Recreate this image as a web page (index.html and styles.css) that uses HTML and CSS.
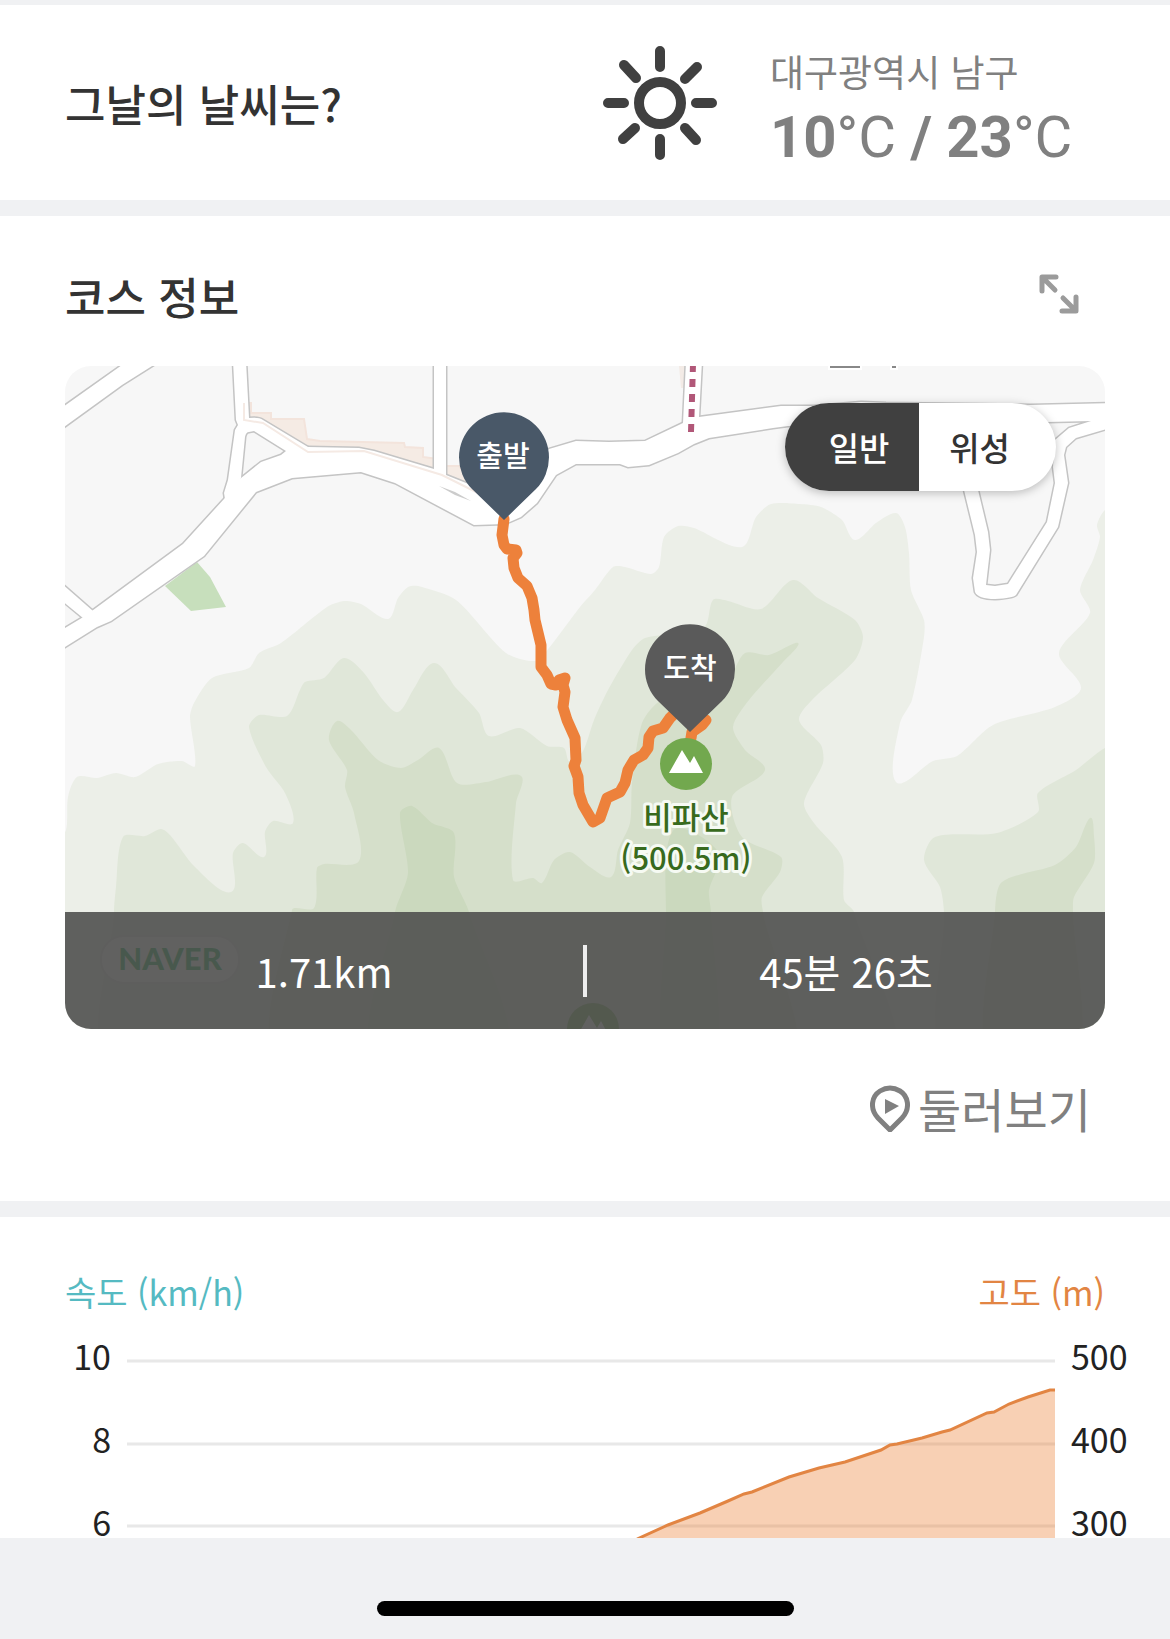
FILE: index.html
```html
<!DOCTYPE html>
<html lang="ko">
  <head>
    <meta charset="utf-8">
    <meta name="viewport" content="width=device-width, initial-scale=1">
    <title>코스 정보</title>
    <link rel="stylesheet" href="styles.css">
  </head>
  <body>
    <main>
      <section class="weather">
        <h2>그날의 날씨는?</h2>
        <svg class="sun" viewBox="0 0 114 114">
          <circle cx="57" cy="57" r="21" />
          <path d="M57 5v16M57 93v16M5 57h16M93 57h16M21 19l12 13M94 21L82 33M20 93l12-11M82 82l11 12" />
        </svg>
        <div class="weather-text">
          <p class="place">대구광역시 남구</p>
          <p class="temp">10<span>°C</span> / 23<span>°C</span></p>
        </div>
      </section>

      <section class="course">
        <div class="course-head">
          <h2>코스 정보</h2>
          <button class="expand" aria-label="확대">
            <svg viewBox="0 0 40 40">
              <path d="M3 17V3h14M4 4l12 12M37 23v14H23M36 36L24 24" />
            </svg>
          </button>
        </div>

        <div class="map">
          <svg class="map-canvas" viewBox="0 0 1040 663" preserveAspectRatio="xMidYMid slice">
            <defs>
              <g id="roads">
                <path d="M-5 265L20 250 35 239 118 178 159 133 176 112 196 96 216 89 221 85 243 81 294 82 309 85 369 103 381 109 406 119 440 125 484 83 511 75 544 76 580 75 618 57 634 51 716 40 749 40 796 36 821 37 966 39 1045 37V62L1011 72 1001 81 999 89 1003 117 993 161 951 229Q948 232 930 233 913 233 910 226L908 212 912 186 910 169 899 124 890 90H904L913 124 923 166 925 184 921 219 930 220 943 218 982 156 990 117 988 101 990 74 1004 62 1026 55 982 56 880 60 723 60 708 62 644 72 629 78 613 87 584 99 563 101 555 98 511 98 491 109 472 137 456 151 440 158 409 159 330 117 296 106 227 112 191 126 139 190 46 255 32 261 -5 284Z" />
                <path d="M168 -5L171 54 173 59 170 64 163 114 159 127 160 133 168 131 176 112 180 71Q181 66 184 66L189 65 221 85 243 95V81L198 54Q194 51 184 52L181 -5Z" />
                <path d="M369 -5V110H381V-5Z" />
                <path d="M621 -5L618 57 620 66 634 60V51L637 -5Z" />
                <path d="M-5 43L57 -1 95 -5 57 19 -5 64Z" />
                <path d="M-5 216L28 245 30 255 18 252 -5 233Z" />
              </g>
              <g id="peak">
                <circle r="26" fill="#72a84e" />
                <path d="M-17 9L-4 -14 4 -1 8 -8 17 9Z" fill="#fff" />
              </g>
            </defs>
            <rect width="1040" height="663" fill="#f7f7f7" />
            <g id="contours"></g>
            <path d="M100 220L132 196 145 211 161 241 126 245Z" fill="#c7dfbc" />
            <path class="block" d="M179 37H186V47H206V53H239L242 73 255 75 339 77 340 81 358 82V91L372 93 373 100H394L418 130 240 90 179 54Z" />
            <path d="M614 0h6v22h-4z" fill="#f3ebe6" />
            <use href="#roads" class="road-edge" />
            <use href="#roads" fill="#fff" />
            <path d="M179 37V54L198 57 243 86 299 85 377 109 421 131" fill="none" stroke="#f5eae4" stroke-width="2" />
            <path d="M374 120L390 126 406 135 390 129Z" fill="#ccc" />
            <path d="M628 -2L626 66" fill="none" stroke="#b15778" stroke-width="6" stroke-dasharray="8 7" />
            <path d="M765 0h30v2h-30zM827 0h4v2h-4z" class="cut-label" />

            <path class="track" d="M439 153L437 169 439 179 442 183 451 184 452 187 448 192 449 202 453 212 462 220 467 232 469 244 470 254 476 279 476 301 482 309 486 318 491 319 494 314 500 312 498 319 500 326 498 341 502 354 510 372 511 394 509 400 513 411 514 427 518 439 528 456 535 452 542 432 555 426 560 417 563 404 569 394 578 389 583 382 584 371 588 365 598 362 605 352 611 346M641 354L637 359 627 366 626 372" />
            <path d="M439 154L407 123A45 45 0 1 1 471 123Z" fill="#495868" />
            <path d="M625 366L593 335A45 45 0 1 1 657 335Z" fill="#5a5a5a" />
            <text class="pin-label" x="438" y="101">출발</text>
            <text class="pin-label" x="625" y="313">도착</text>
            <use href="#peak" x="621" y="398" />
            <text class="peak-label" x="621" y="463">비파산</text>
            <text class="peak-label" x="621" y="504">(500.5m)</text>
            <use href="#peak" x="528" y="663" />
            <rect x="36" y="570" width="138" height="47" rx="23" fill="#fff" stroke="#ddd" stroke-width="2" />
            <text class="brand" x="105" y="604">NAVER</text>
          </svg>

          <div class="map-type">
            <button class="on">일반</button>
            <button>위성</button>
          </div>

          <div class="stats">
            <span>1.71km</span>
            <i></i>
            <span>45분 26초</span>
          </div>
        </div>

        <a class="look" href="#">
          <svg viewBox="0 -2 40 48">
            <path d="M20 44L8 32C-1 22 2 10 10 5Q20 -1 30 5C38 10 41 22 32 32Z" fill="none" stroke="#808080" stroke-width="5" />
            <path d="M15 13v15l14-8z" fill="#808080" />
          </svg>
          둘러보기
        </a>
      </section>

      <section class="chart">
        <div class="chart-head">
          <span class="speed">속도 (km/h)</span>
          <span class="height">고도 (m)</span>
        </div>
        <div class="plot">
          <div class="axis axis-left">
            <span>10</span>
            <span>8</span>
            <span>6</span>
          </div>
          <svg viewBox="0 0 928 222" preserveAspectRatio="none">
            <path d="M0 45H928M0 128H928M0 210H928" stroke="#e8e8e8" stroke-width="3" />
            <path d="M510 223L541 209 573 197 601 185 617 178 625 176 662 161 692 152 718 146 754 134 763 129 770 128 795 122 815 116 823 114 860 97 867 96 882 88 901 81 923 74 928 74V223Z" fill="#eb7e30" fill-opacity=".36" />
            <path d="M510 223L541 209 573 197 601 185 617 178 625 176 662 161 692 152 718 146 754 134 763 129 770 128 795 122 815 116 823 114 860 97 867 96 882 88 901 81 923 74 928 74" fill="none" stroke="#e28543" stroke-width="3" />
          </svg>
          <div class="axis">
            <span>500</span>
            <span>400</span>
            <span>300</span>
          </div>
        </div>
      </section>
    </main>
    <footer>
      <div class="home-bar"></div>
    </footer>
    <script src="script.js"></script>
  </body>
</html>
```

FILE: styles.css
```css
* {
  box-sizing: border-box;
}
body {
  margin: 0;
  background-color: #f0f1f3;
  color: #333;
  font-family: "Noto Sans CJK KR", sans-serif;
}
h2, p {
  margin: 0;
}
h2 {
  font-size: 44px;
  font-weight: 500;
  line-height: 60px;
}
button {
  border: 0;
  padding: 0;
  background: none;
  font: inherit;
  color: inherit;
}
section {
  background-color: #fff;
  padding: 0 65px;
  margin-bottom: 16px;
}

/* weather */
.weather {
  display: flex;
  align-items: center;
  margin-top: 5px;
  height: 195px;
}
.weather h2 {
  flex: 1;
}
.sun {
  width: 114px;
  height: 114px;
  fill: none;
  stroke: #404040;
  stroke-width: 10px;
  stroke-linecap: round;
}
.weather-text {
  width: 335px;
  margin-left: 53px;
  padding-top: 6px;
  color: #808080;
}
.place {
  font-size: 37px;
  line-height: 62px;
}
.temp {
  font-family: Roboto, "Noto Sans CJK KR", sans-serif;
  font-size: 58px;
  font-weight: bold;
  line-height: 70px;
  white-space: nowrap;
}
.temp span {
  font-weight: 400;
}

/* course */
.course {
  padding-bottom: 60px;
}
.course-head {
  display: flex;
  justify-content: space-between;
  align-items: flex-end;
  height: 150px;
  padding: 0 26px 40px 0;
}
.expand {
  padding-bottom: 12px;
}
.expand svg {
  display: block;
  width: 40px;
  height: 40px;
  fill: none;
  stroke: #9b9b9b;
  stroke-width: 5px;
  stroke-linecap: round;
  stroke-linejoin: round;
}
.map {
  position: relative;
  aspect-ratio: 1040 / 663;
  border-radius: 26px;
  overflow: hidden;
}
.map-canvas {
  display: block;
  width: 100%;
  height: 100%;
  text-anchor: middle;
}
.block {
  fill: #f5ebe4;
  stroke: #f3e4dc;
  stroke-width: 2px;
}
.road-edge {
  fill: #fff;
  stroke: #c4c4c4;
  stroke-width: 3px;
}
.cut-label {
  fill: #888;
  stroke: #fff;
  stroke-width: 4px;
  paint-order: stroke;
}
.track {
  fill: none;
  stroke: #ed813b;
  stroke-width: 11px;
  stroke-linecap: round;
  stroke-linejoin: round;
}
.pin-label {
  fill: #fff;
  font-size: 29px;
  font-weight: 500;
}
.peak-label {
  fill: #386a1d;
  font-size: 31px;
  font-weight: 500;
  stroke: #f6faf3;
  stroke-width: 6px;
  stroke-linejoin: round;
  paint-order: stroke;
}
.brand {
  fill: #03a63c;
  font-family: Lato, sans-serif;
  font-size: 31px;
  font-weight: 900;
}
.map-type {
  position: absolute;
  top: 37px;
  right: 49px;
  display: flex;
  width: 271px;
  height: 88px;
  border-radius: 44px;
  overflow: hidden;
  background-color: #fff;
  box-shadow: 0 2px 10px rgba(0, 0, 0, .25);
  font-size: 33px;
  font-weight: 500;
}
.map-type button {
  width: 137px;
  padding-right: 16px;
}
.map-type .on {
  width: 134px;
  padding: 0 0 0 14px;
  background-color: #404040;
  color: #fff;
}
.stats {
  position: absolute;
  left: 0;
  right: 0;
  bottom: 0;
  display: flex;
  align-items: center;
  height: 117px;
  background-color: rgba(80, 80, 79, .9);
  color: #fff;
  font-size: 40px;
  text-align: center;
}
.stats span {
  flex: 1;
}
.stats i {
  width: 4px;
  height: 52px;
  background-color: #eee;
}
.look {
  display: flex;
  justify-content: flex-end;
  align-items: center;
  gap: 8px;
  margin-top: 46px;
  padding-right: 14px;
  color: #808080;
  font-size: 47px;
  line-height: 66px;
  text-decoration: none;
}
.look svg {
  width: 40px;
  height: 48px;
}

/* chart */
.chart {
  height: 321px;
  padding: 45px 0 0;
  margin: 0;
  overflow: hidden;
}
.chart-head {
  display: flex;
  justify-content: space-between;
  height: 52px;
  padding: 0 65px;
  font-size: 34px;
  line-height: 60px;
}
.speed {
  color: #55bac2;
}
.height {
  color: #e28543;
}
.plot {
  display: grid;
  grid-template-columns: 111px 1fr 99px;
  column-gap: 16px;
}
.plot svg {
  width: 100%;
  height: 222px;
  margin-top: 2px;
}
.axis {
  display: flex;
  flex-direction: column;
  color: #222;
  font-size: 34px;
  line-height: 83px;
}
.axis-left {
  text-align: right;
}

footer {
  padding: 63px 0 23px;
}
.home-bar {
  width: 417px;
  height: 15px;
  margin: 0 auto;
  border-radius: 8px;
  background-color: #000;
}
```

FILE: script.js
```js
// height contours of the map, lowest first
var contours = [
  { color: "#ecefe8", points: "-20,700 -20,480 0,466 2,457 3,431 12,411 32,412 51,407 70,411 93,398 117,395 130,400 125,351 129,337 147,312 184,302 194,287 216,277 262,241 279,235 296,238 323,253 333,232 343,221 353,220 391,234 441,287 470,295 484,282 515,241 530,224 548,201 560,201 586,208 594,201 599,171 613,160 629,162 677,181 691,151 706,138 735,138 756,141 777,154 790,174 811,157 831,147 840,161 844,187 846,224 859,254 859,271 847,334 835,357 831,416 868,395 892,390 928,359 990,341 1016,322 994,287 1025,247 1015,224 1028,194 1035,171 1032,159 1040,144 1080,120 1080,700" },
  { color: "#e0e7d9", points: "50,700 49,546 51,521 58,471 80,470 96,463 105,469 130,501 166,526 168,487 178,477 199,491 200,466 208,455 228,457 220,427 201,401 184,361 194,349 222,350 235,324 240,316 259,312 279,292 299,307 318,334 333,346 348,324 369,297 391,322 414,347 424,370 455,362 482,380 499,382 505,396 518,385 529,354 543,324 567,284 580,272 639,261 648,234 663,235 696,243 728,214 753,232 790,254 798,271 790,294 747,334 734,354 756,379 758,397 739,437 749,457 777,491 779,534 789,546 820,700" },
  { color: "#e0e7d9", points: "885,700 879,546 875,521 859,494 870,471 932,467 973,446 973,427 1011,404 1040,382 1080,370 1080,700" },
  { color: "#d5dfca", points: "220,700 227,544 249,542 252,502 259,498 294,495 289,447 280,421 282,404 264,374 272,355 286,364 313,394 336,402 353,394 374,382 392,417 421,416 456,410 451,437 448,514 468,512 477,517 489,494 505,486 525,501 546,511 553,484 565,457 567,417 577,357 596,334 640,320 665,310 680,287 704,289 733,277 718,296 684,334 668,361 680,384 700,404 667,431 677,471 716,491 715,506 697,531 698,546 720,700" },
  { color: "#d5dfca", points: "925,700 930,546 937,516 990,499 1011,481 1025,452 1029,470 1029,497 1009,531 1008,546 1010,700" },
  { color: "#cbd9be", points: "310,700 330,546 343,507 335,447 347,440 367,457 389,467 389,511 404,546 440,700" },
  { color: "#cbd9be", points: "600,700 601,546 601,491 610,463 635,470 655,490 644,524 646,546 650,700" }
];

// smooth closed curve through the points
function smoothPath(p) {
  var n = p.length;
  var d = "M" + p[0];
  for (var i = 0; i < n; i++) {
    var a = p[(i + n - 1) % n], b = p[i], c = p[(i + 1) % n], e = p[(i + 2) % n];
    // shorter handles where neighbours are far apart
    var len = Math.hypot(c[0] - b[0], c[1] - b[1]);
    var k1 = len / (Math.hypot(c[0] - a[0], c[1] - a[1]) || 1) / 4;
    var k2 = len / (Math.hypot(e[0] - b[0], e[1] - b[1]) || 1) / 4;
    k1 = Math.min(k1, 0.25);
    k2 = Math.min(k2, 0.25);
    d += "C" + [b[0] + (c[0] - a[0]) * k1, b[1] + (c[1] - a[1]) * k1,
      c[0] - (e[0] - b[0]) * k2, c[1] - (e[1] - b[1]) * k2, c[0], c[1]].join(" ");
  }
  return d + "Z";
}

var group = document.getElementById("contours");
contours.forEach(function(item) {
  var points = item.points.split(" ").map(function(pair) {
    return pair.split(",").map(Number);
  });
  var path = document.createElementNS("http://www.w3.org/2000/svg", "path");
  path.setAttribute("d", smoothPath(points));
  path.setAttribute("fill", item.color);
  group.appendChild(path);
});
```
